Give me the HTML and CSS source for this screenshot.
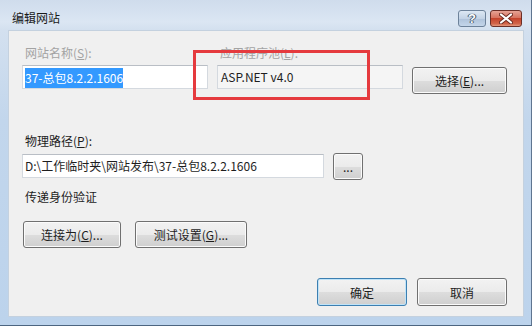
FILE: index.html
```html
<html>
<head>
  <title>编辑网站</title>
  <meta charset="utf-8">
  <link rel="stylesheet" href="styles.css">
</head>
<body>

  <div class="window">
    <div class="titlebar">
      <span class="title">编辑网站</span>
      <div class="caps">
        <span class="cap help">?</span>
        <span class="cap close">
          <svg width="14" height="11" viewBox="0 0 14 11">
            <path d="M2 1.5 L12 9.5 M12 1.5 L2 9.5" stroke="#6b2a20" stroke-width="4" stroke-linecap="round"/>
            <path d="M2 1.5 L12 9.5 M12 1.5 L2 9.5" stroke="#fff" stroke-width="2.2" stroke-linecap="round"/>
          </svg>
        </span>
      </div>
    </div>

    <div class="client">
      <div class="top-row">
        <div class="field">
          <div class="lbl dim">网站名称(<u>S</u>):</div>
          <div class="textbox"><span class="sel">37-总包8.2.2.1606</span></div>
        </div>
        <div class="field">
          <div class="lbl dim">应用程序池(<u>L</u>):</div>
          <div class="textbox readonly">ASP.NET v4.0</div>
        </div>
        <button class="btn btn-select">选择(<u>E</u>)...</button>
      </div>

      <div class="lbl path-lbl">物理路径(<u>P</u>):</div>
      <div class="path-row">
        <div class="textbox path">D:\工作临时夹\网站发布\37-总包8.2.2.1606</div>
        <button class="btn btn-dots">...</button>
      </div>

      <div class="lbl auth">传递身份验证</div>

      <div class="btn-row">
        <button class="btn btn-connect">连接为(<u>C</u>)...</button>
        <button class="btn btn-test">测试设置(<u>G</u>)...</button>
      </div>

      <div class="footer">
        <button class="btn btn-ok">确定</button>
        <button class="btn btn-cancel">取消</button>
      </div>
    </div>

    <!-- red annotation box drawn over the dialog -->
    <div class="mark"></div>
  </div>

</body>
</html>
```

FILE: styles.css
```css
body {
  margin: 0;
  background: #ffffff;
  font-family: "Noto Sans CJK SC", "Liberation Sans", sans-serif;
  font-size: 12px;
}

.window {
  position: relative;
  width: 532px;
  height: 326px;
  box-sizing: border-box;
  display: flex;
  flex-direction: column;
  padding-bottom: 8px;
  border-right: 1px solid #5f7590;
  border-bottom: 1px solid #4c6580;
  background: linear-gradient(#cfdcec 0px, #dbe6f3 22px, #d3e0ef 30px, #c2d6ec 120px, #bcd3ec 100%);
}

.titlebar {
  height: 30px;
  display: flex;
  justify-content: space-between;
  align-items: flex-start;
  padding: 0 9px 0 12px;
}

.title {
  margin-top: 9px;
  line-height: 18px;
  color: #1a1a1a;
}

.caps {
  display: flex;
  gap: 4px;
  margin-top: 10px;
}

.cap {
  height: 17px;
  box-sizing: border-box;
  border: 1px solid #6d829a;
  border-radius: 3px;
  display: flex;
  align-items: center;
  justify-content: center;
}

.help {
  width: 28px;
  background: linear-gradient(#dde8f4, #c3d3e6 50%, #aec2da 51%, #c4d6ea);
  color: #fff;
  font-family: "Liberation Sans", sans-serif;
  font-weight: bold;
  font-size: 13px;
  line-height: 15px;
  text-shadow: 0 0 1px #3b4d62, 0 0 1px #3b4d62, 1px 0 0 #4a5d73, -1px 0 0 #4a5d73;
}

.close {
  width: 32px;
  border-color: #6b2f27;
  background: linear-gradient(#e6a395, #d7735f 45%, #c4442c 50%, #d2654a 85%, #e39a7e);
}

.client {
  flex: 1;
  margin: 0 7px 0 8px;
  box-sizing: border-box;
  border: 1px solid #c4d1df;
  background: #f0f0f0;
  padding: 14px 16px 0 13px;
  display: flex;
  flex-direction: column;
  color: #1e1e1e;
}

.lbl {
  line-height: 16px;
  padding-left: 3px;
}

.dim {
  color: #a3a3a3;
}

.top-row {
  display: flex;
  gap: 9px;
  align-items: flex-start;
}

.field {
  display: flex;
  flex-direction: column;
  gap: 4px;
  width: 186px;
}

.textbox {
  height: 24px;
  box-sizing: border-box;
  border: 1px solid #d4d9df;
  border-top-color: #b9bec5;
  background: #ffffff;
  padding: 0 2px;
  line-height: 22px;
  white-space: nowrap;
  overflow: hidden;
}

.readonly {
  background: #f5f5f5;
  padding-left: 3px;
}

.sel {
  display: inline-block;
  height: 20px;
  line-height: 20px;
  margin-top: 2px;
  vertical-align: top;
  background: #3399ff;
  color: #ffffff;
}

.btn {
  height: 27px;
  box-sizing: border-box;
  padding: 0;
  border: 1px solid #707070;
  border-radius: 3px;
  background: linear-gradient(#f2f2f2 0%, #ebebeb 50%, #dddddd 51%, #cfcfcf 100%);
  box-shadow: inset 0 0 0 1px #fbfbfb;
  font-family: "Noto Sans CJK SC", "Liberation Sans", sans-serif;
  font-size: 12px;
  color: #1e1e1e;
}

.btn-select {
  width: 95px;
  margin-top: 22px;
}

.path-lbl {
  margin-top: 39px;
  margin-bottom: 4px;
}

.path-row {
  display: flex;
  gap: 9px;
  align-items: flex-start;
}

.path {
  width: 302px;
  margin-top: 1px;
}

.btn-dots {
  width: 30px;
  line-height: 10px;
}

.auth {
  margin-top: 9px;
}

.btn-row {
  display: flex;
  gap: 14px;
  margin-top: 16px;
  padding-left: 1px;
}

.btn-connect {
  width: 98px;
}

.btn-test {
  width: 112px;
}

.footer {
  display: flex;
  justify-content: flex-end;
  gap: 10px;
  margin-top: 30px;
}

.btn-ok,
.btn-cancel {
  width: 90px;
  height: 28px;
}

.btn-ok {
  border-color: #3c7fb1;
  box-shadow: inset 0 0 0 1px #bfe3f8;
}

.mark {
  position: absolute;
  left: 193px;
  top: 50px;
  width: 177px;
  height: 50px;
  box-sizing: border-box;
  border: 3px solid #e53a3e;
}
```
